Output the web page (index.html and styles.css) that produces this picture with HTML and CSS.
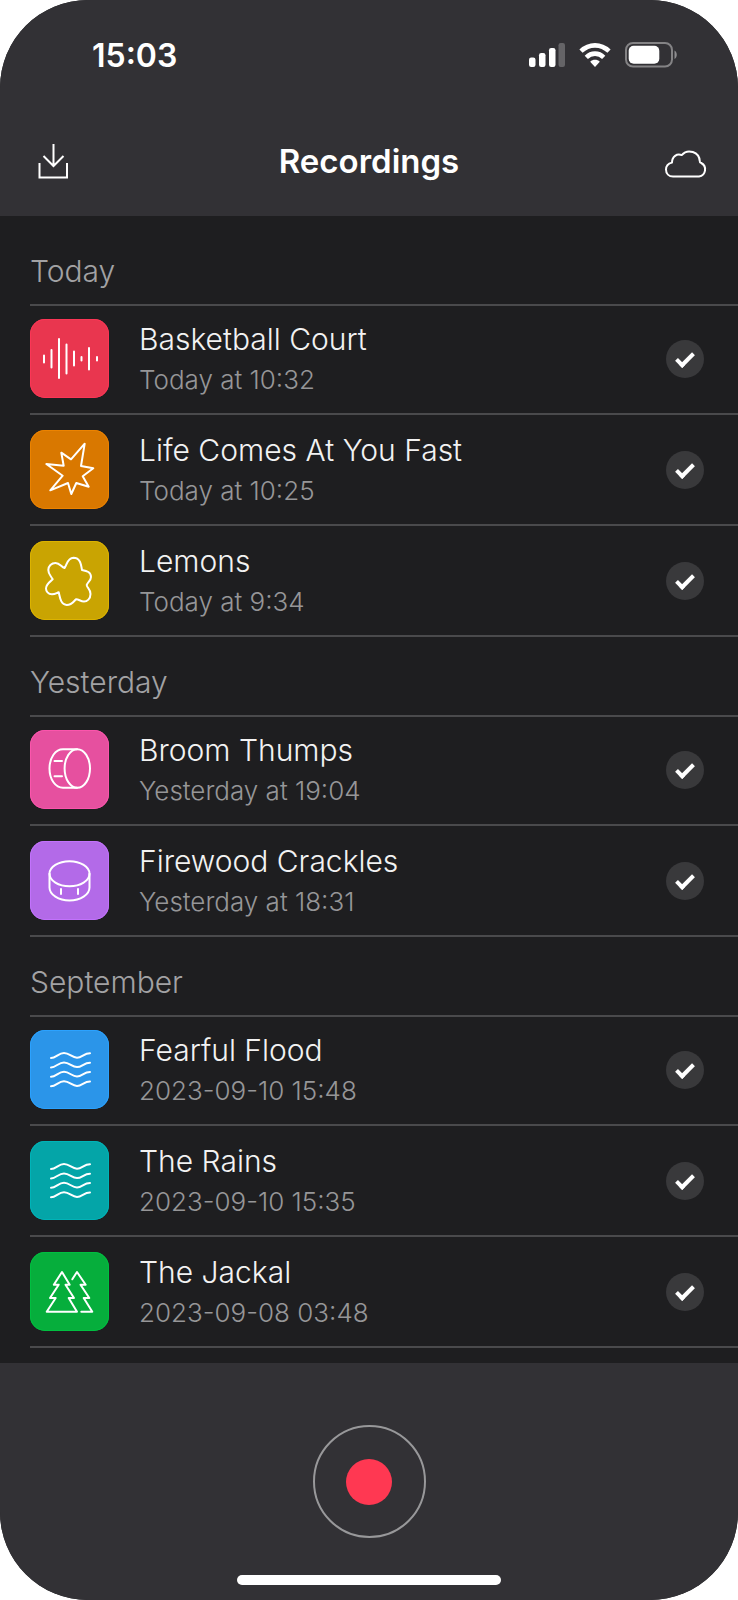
FILE: index.html
```html
<!DOCTYPE html>
<html lang="en">
<head>
    <meta charset="UTF-8">
    <meta name="viewport" content="width=device-width, initial-scale=1.0">
    <title>Recordings</title>
    <link rel="stylesheet" href="styles.css">
</head>
<body>
    <div class="phone">
        <header class="header">
            <!-- Status Bar -->
            <div class="status-bar">
                <time class="clock">15:03</time>
                <div class="status-icons">
                    <svg width="38" height="26" viewBox="0 0 38 26" fill="#fff">
                        <rect x="2" y="15.500" width="6.500" height="9.500" rx="2.2"/>
                        <rect x="12" y="11" width="6.500" height="14" rx="2.2"/>
                        <rect x="22" y="6" width="6.500" height="19" rx="2.2"/>
                        <rect x="31.500" y="1" width="6.500" height="24" rx="2.2" opacity=".25"/>
                    </svg>
                    <svg width="32" height="26" viewBox="0 0 32 26">
                        <g fill="none" stroke="#fff" stroke-width="4.6">
                            <path d="M2 9.2C10 1.4 22 1.4 30 9.2"/>
                            <path d="M7.3 15.3C12.3 10.4 19.7 10.4 24.7 15.3"/>
                        </g>
                        <path d="M16 25L11.2 19.8C13.8 17.2 18.2 17.2 20.8 19.8Z" fill="#fff"/>
                    </svg>
                    <svg width="52" height="26" viewBox="0 0 52 26">
                        <rect x="1" y="1" width="46" height="23.5" rx="7" fill="none" stroke="#fff" stroke-width="2" opacity=".4"/>
                        <rect x="3.7" y="3.7" width="30.6" height="18" rx="5" fill="#fff"/>
                        <path d="M49.5 8.5C52.5 10 52.5 15.5 49.5 17Z" fill="#fff" opacity=".45"/>
                    </svg>
                </div>
            </div>

            <!-- Title Bar -->
            <div class="nav-bar">
                <button type="button" class="icon-button" aria-label="Import">
                    <svg width="44" height="44" viewBox="0 0 44 44" fill="none" stroke="#fff" stroke-width="2">
                        <path d="M8.5 24V38.5H36V24M22.5 5V27M12.5 17L22.5 27L32.5 17"/>
                    </svg>
                </button>
                <h1>Recordings</h1>
                <button type="button" class="icon-button" aria-label="Cloud sync">
                    <svg width="44" height="44" viewBox="0 0 44 44" fill="none" stroke="#fff" stroke-width="2" stroke-linejoin="round">
                        <path d="M10 37.5H36A7.2 7.2 0 0 0 38.2 24C37.2 23.8 36.7 23.5 36.8 22.3A10.3 10.3 0 0 0 18.7 16.1C14 14.3 9 17.3 9 23.6C5 24.6 3 27.5 3 30.5C3 34.8 6 37.5 10 37.5Z"/>
                    </svg>
                </button>
            </div>
        </header>

        <main class="list">
            <section class="group">
                <h2>Today</h2>
                <ul>
                    <li class="row">
                        <svg class="tile red" viewBox="0 0 79 79">
                            <path d="M14 36.5V43.5M21.5 31V48.5M29 20V59M36.5 25.5V54.5M44 32.5V46.5M51.5 38V41.5M59 29V50.5M67 38V41.5"/>
                        </svg>
                        <div class="info">
                            <h3>Basketball Court</h3>
                            <p>Today at 10:32</p>
                        </div>
                        <input type="checkbox" class="check" aria-label="Basketball Court" checked>
                    </li>
                    <li class="row">
                        <svg class="tile orange" viewBox="0 0 79 79">
                            <path d="M54.7 13.7L51 36L63.3 38.3L52.7 46.3L58.7 56.7L46.3 53L41.3 64L38 53L20.3 60.3L32.7 45.7L16.3 34L33.7 35.7L31.3 22.7L41 29.3Z"/>
                        </svg>
                        <div class="info">
                            <h3>Life Comes At You Fast</h3>
                            <p>Today at 10:25</p>
                        </div>
                        <input type="checkbox" class="check" aria-label="Life Comes At You Fast" checked>
                    </li>
                    <li class="row">
                        <svg class="tile yellow" viewBox="0 0 79 79">
                            <path d="M34.5 27C37 24 37 17 43.5 16.7C50 16.7 51 23 52 29C57 30 61 31 61 36C61 40 57.5 41 56.7 44C57 47 60.5 48 60.5 53C60.5 58 57 60.5 54 60.5C50.5 60.5 48.5 58 46 58.3C44 60 42 64 36.7 64C31 64 30 57 28.7 51.3C27 51.5 25.5 53.3 22 53.3C18 53.3 16 50 16 47.5C16 43 20 41 22.7 38.3C21 35 18.3 33.5 18.3 29C18.3 25 21.5 22 25.5 22C30 22 31.5 26.5 34.5 27Z"/>
                        </svg>
                        <div class="info">
                            <h3>Lemons</h3>
                            <p>Today at 9:34</p>
                        </div>
                        <input type="checkbox" class="check" aria-label="Lemons" checked>
                    </li>
                </ul>
            </section>

            <section class="group">
                <h2>Yesterday</h2>
                <ul>
                    <li class="row">
                        <svg class="tile pink" viewBox="0 0 79 79">
                            <ellipse cx="47.3" cy="38.5" rx="12.7" ry="19.3"/>
                            <path d="M47 19.2H33C25.5 19.2 19.5 27.5 19.5 38.5S25.5 57.8 33 57.8H47M24.5 31H32M24.5 46.3H32"/>
                        </svg>
                        <div class="info">
                            <h3>Broom Thumps</h3>
                            <p>Yesterday at 19:04</p>
                        </div>
                        <input type="checkbox" class="check" aria-label="Broom Thumps" checked>
                    </li>
                    <li class="row">
                        <svg class="tile purple" viewBox="0 0 79 79">
                            <ellipse cx="39.5" cy="32.7" rx="20" ry="12.5"/>
                            <path d="M19.5 32.7V46.5C19.5 53.5 28.5 59.5 39.5 59.5S59.5 53.5 59.5 46.5V32.7M31 48V53M48 48V53"/>
                        </svg>
                        <div class="info">
                            <h3>Firewood Crackles</h3>
                            <p>Yesterday at 18:31</p>
                        </div>
                        <input type="checkbox" class="check" aria-label="Firewood Crackles" checked>
                    </li>
                </ul>
            </section>

            <section class="group">
                <h2>September</h2>
                <ul>
                    <li class="row">
                        <svg class="tile blue" viewBox="0 0 79 79">
                            <path d="M21 28C26 28 28.5 23 34 23S42 27.7 47 27.7S54 23.3 60 23.3"/>
                            <path d="M21 37.4C26 37.4 28.5 32.4 34 32.4S42 37.1 47 37.1S54 32.7 60 32.7"/>
                            <path d="M21 46.8C26 46.8 28.5 41.8 34 41.8S42 46.5 47 46.5S54 42.1 60 42.1"/>
                            <path d="M21 56.2C26 56.2 28.5 51.2 34 51.2S42 55.9 47 55.9S54 51.5 60 51.5"/>
                        </svg>
                        <div class="info">
                            <h3>Fearful Flood</h3>
                            <p>2023-09-10 15:48</p>
                        </div>
                        <input type="checkbox" class="check" aria-label="Fearful Flood" checked>
                    </li>
                    <li class="row">
                        <svg class="tile teal" viewBox="0 0 79 79">
                            <path d="M21 28C26 28 28.5 23 34 23S42 27.7 47 27.7S54 23.3 60 23.3"/>
                            <path d="M21 37.4C26 37.4 28.5 32.4 34 32.4S42 37.1 47 37.1S54 32.7 60 32.7"/>
                            <path d="M21 46.8C26 46.8 28.5 41.8 34 41.8S42 46.5 47 46.5S54 42.1 60 42.1"/>
                            <path d="M21 56.2C26 56.2 28.5 51.2 34 51.2S42 55.9 47 55.9S54 51.5 60 51.5"/>
                        </svg>
                        <div class="info">
                            <h3>The Rains</h3>
                            <p>2023-09-10 15:35</p>
                        </div>
                        <input type="checkbox" class="check" aria-label="The Rains" checked>
                    </li>
                    <li class="row">
                        <svg class="tile green" viewBox="0 0 79 79">
                            <path d="M32 20L39.7 32.7H35.5L44 46H38.7L47 59.7H16.7L25.7 46H20L28.7 32.7H23.8Z"/>
                            <path d="M42.3 27.3L47 20L55.7 32.7H50.5L59.3 46H53.7L62.3 59.7H51.3"/>
                        </svg>
                        <div class="info">
                            <h3>The Jackal</h3>
                            <p>2023-09-08 03:48</p>
                        </div>
                        <input type="checkbox" class="check" aria-label="The Jackal" checked>
                    </li>
                </ul>
            </section>
        </main>

        <footer class="footer">
            <button type="button" class="record" aria-label="Record"></button>
            <div class="home-bar"></div>
        </footer>
    </div>
</body>
</html>
```
FILE: styles.css
```css
/* General Styles */
*,
*::before,
*::after {
    box-sizing: border-box;
    margin: 0;
    padding: 0;
}

body {
    font-family: Inter, "Liberation Sans", sans-serif;
    background-color: #ffffff;
    color: #f2f2f2;
}

ul {
    list-style: none;
}

svg {
    display: block;
}

button {
    border: none;
    background: none;
    cursor: pointer;
}

.phone {
    min-height: 100vh;
    display: flex;
    flex-direction: column;
    background-color: #1e1e20;
    border-radius: 88px;
    overflow: hidden;
}

/* Header */
.header {
    background-color: #323135;
    color: #ffffff;
}

.status-bar {
    display: flex;
    justify-content: space-between;
    align-items: center;
    height: 110px;
    padding: 0 61px 0 92px;
}

.clock {
    font-size: 32px;
    font-weight: 600;
}

.status-icons {
    display: flex;
    gap: 14px;
}

.nav-bar {
    display: flex;
    justify-content: space-between;
    align-items: center;
    height: 106px;
    padding: 0 31px 4px;
}

h1 {
    font-size: 33px;
    font-weight: 600;
}

/* Recording List */
.list {
    flex: 1;
    padding: 10px 0 14px 30px;
}

h2 {
    height: 80px;
    line-height: 91px;
    border-bottom: 2px solid #4a4a4c;
    font-size: 30px;
    font-weight: 300;
    color: #a2a2a4;
}

.row {
    display: flex;
    align-items: center;
    gap: 30px;
    height: 111px;
    padding-right: 34px;
    border-bottom: 2px solid #4a4a4c;
}

.row:first-child {
    height: 109px;
    padding-bottom: 2px;
}

.tile {
    flex: none;
    width: 79px;
    height: 79px;
    border-radius: 15px;
    fill: none;
    stroke: #ffffff;
    stroke-width: 2;
    stroke-linecap: round;
    stroke-linejoin: round;
}

.red { background-color: #e9364f; box-shadow: inset 0 0 0 1px #fb3656; }
.orange { background-color: #d97800; box-shadow: inset 0 0 0 1px #ec8300; }
.yellow { background-color: #c9a402; box-shadow: inset 0 0 0 1px #dcb300; }
.pink { background-color: #e6509f; box-shadow: inset 0 0 0 1px #fb55ac; }
.purple { background-color: #b36ae8; box-shadow: inset 0 0 0 1px #c272fc; }
.blue { background-color: #2b95e9; box-shadow: inset 0 0 0 1px #2ba2ff; }
.teal { background-color: #04a5a8; box-shadow: inset 0 0 0 1px #00b4b8; }
.green { background-color: #06ae3c; box-shadow: inset 0 0 0 1px #00bf40; }

.info {
    flex: 1;
}

h3 {
    font-size: 30px;
    line-height: 42px;
    font-weight: 300;
}

.info p {
    font-size: 26px;
    line-height: 40px;
    font-weight: 300;
    color: #969698;
}

.check {
    appearance: none;
    display: grid;
    place-items: center;
    width: 38px;
    height: 38px;
    border-radius: 50%;
    background-color: #39393b;
}

.check:checked::after {
    content: "";
    width: 10px;
    height: 18px;
    margin-bottom: 2px;
    border: solid #ffffff;
    border-width: 0 4px 4px 0;
    transform: rotate(45deg);
}

/* Footer */
.footer {
    display: flex;
    flex-direction: column;
    align-items: center;
    gap: 37px;
    padding: 62px 0 15px;
    background-color: #323135;
}

.record {
    display: grid;
    place-items: center;
    width: 113px;
    height: 113px;
    border: 2px solid #98989a;
    border-radius: 50%;
}

.record::before {
    content: "";
    width: 46px;
    height: 46px;
    border-radius: 50%;
    background-color: #ff3852;
}

.home-bar {
    width: 264px;
    height: 10px;
    border-radius: 5px;
    background-color: #ffffff;
}
```
